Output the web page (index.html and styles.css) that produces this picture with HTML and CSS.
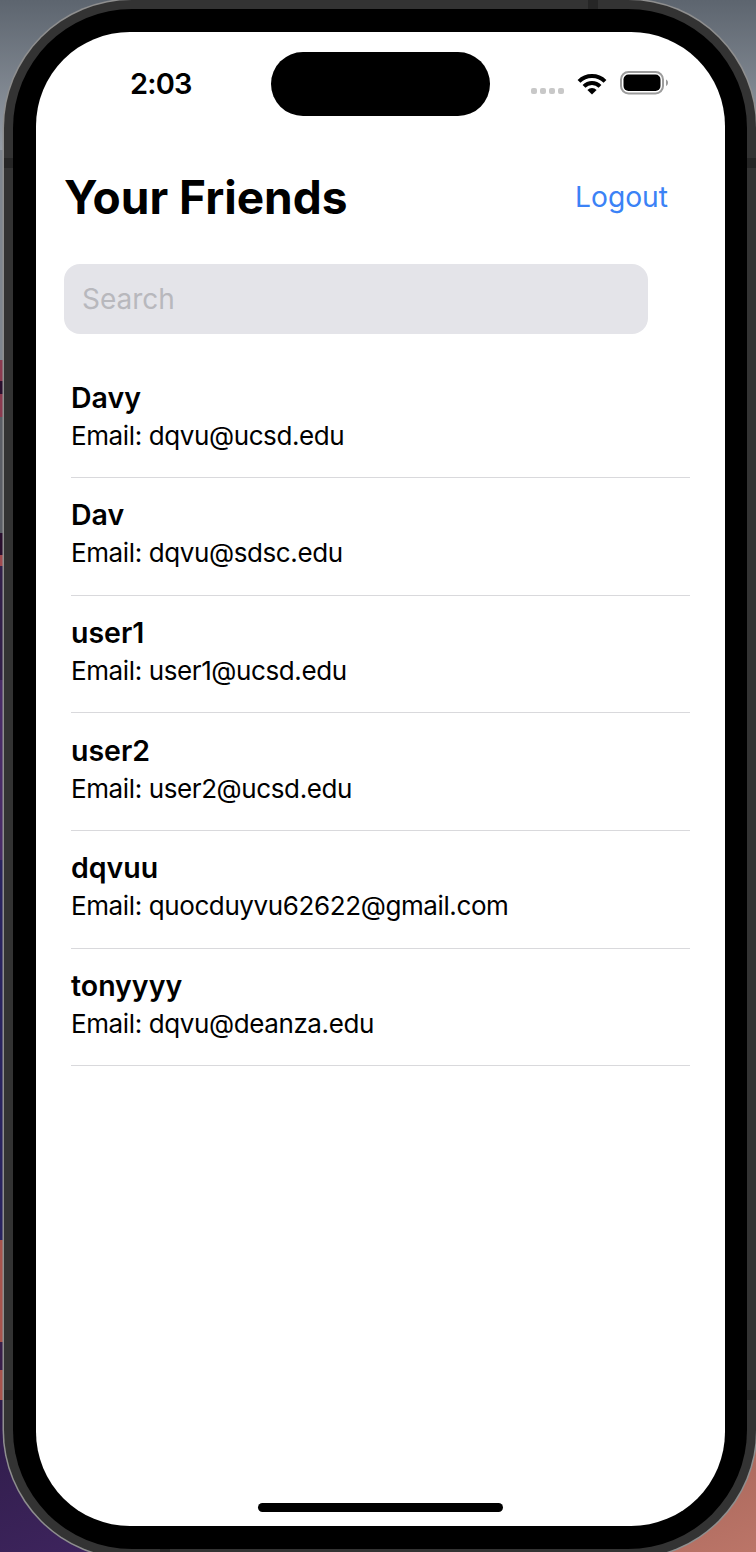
FILE: index.html
```html
<!DOCTYPE html>
<html lang="en">
<head>
  <meta charset="UTF-8">
  <title>Your Friends</title>
  <link rel="stylesheet" href="styles.css">
</head>
<body>
  <div class="device">
    <span class="band band-top"></span>
    <span class="band band-bottom"></span>
    <span class="band band-left-1"></span>
    <span class="band band-left-2"></span>
    <span class="band band-right-1"></span>
    <span class="band band-right-2"></span>
    <div class="bezel">
      <div class="screen">

        <!-- Status bar -->
        <div class="status">
          <div class="time">2:03</div>
          <div class="island"></div>
          <div class="icons">
            <div class="dots"><i></i><i></i><i></i><i></i></div>
            <svg class="wifi" width="30" height="23" viewBox="0 0 30 23">
              <path d="M2 9.4a18.4 18.4 0 0 1 26 0" fill="none" stroke="#000" stroke-width="4"/>
              <path d="M7 14.4a11.3 11.3 0 0 1 16 0" fill="none" stroke="#000" stroke-width="4"/>
              <path d="M15 22.6 10.4 18a6.5 6.5 0 0 1 9.2 0z" fill="#000"/>
            </svg>
            <svg class="battery" width="48" height="24" viewBox="0 0 48 24">
              <rect x="1" y="1" width="42" height="21.5" rx="7.5" fill="#fff" stroke="#9c9c9c" stroke-width="2"/>
              <rect x="3.5" y="3.5" width="37" height="16.5" rx="5" fill="#000"/>
              <path d="M46 8.5c1.2.4 2 1.700 2 3.200s-.8 2.800-2 3.200z" fill="#9c9c9c"/>
            </svg>
          </div>
        </div>

        <!-- Header -->
        <div class="header">
          <h1>Your Friends</h1>
          <a class="logout">Logout</a>
        </div>

        <div class="search">Search</div>

        <!-- Friends list -->
        <div class="list">
          <div class="row">
            <div class="name">Davy</div>
            <div class="email">Email: dqvu@ucsd.edu</div>
          </div>
          <div class="row">
            <div class="name">Dav</div>
            <div class="email">Email: dqvu@sdsc.edu</div>
          </div>
          <div class="row">
            <div class="name">user1</div>
            <div class="email">Email: user1@ucsd.edu</div>
          </div>
          <div class="row">
            <div class="name">user2</div>
            <div class="email">Email: user2@ucsd.edu</div>
          </div>
          <div class="row">
            <div class="name">dqvuu</div>
            <div class="email">Email: quocduyvu62622@gmail.com</div>
          </div>
          <div class="row">
            <div class="name">tonyyyy</div>
            <div class="email">Email: dqvu@deanza.edu</div>
          </div>
        </div>

        <div class="home-bar"></div>
      </div>
    </div>
  </div>
</body>
</html>
```

FILE: styles.css
```css
html {
  overflow: hidden;
}

body {
  margin: 0;
  height: 1552px;
  overflow: hidden;
  font-family: Inter, "Noto Sans", sans-serif;
  color: #000;
  background:
    linear-gradient(to bottom,
      transparent 0, transparent 150px,
      #7f868f 150px, #7f868f 360px,
      #8b3a50 360px, #8b3a50 381px,
      #2a0f2e 381px, #2a0f2e 394px,
      #8b3a50 394px, #8b3a50 417px,
      #5b5e66 417px, #5b5e66 533px,
      #2a0f2e 533px, #2a0f2e 555px,
      #a04a50 555px, #a04a50 566px,
      #33204a 566px, #33204a 680px,
      #4a2c68 680px, #4a2c68 860px,
      #2a2460 860px, #2a2460 1240px,
      #a8544e 1240px, #a8544e 1342px,
      #3a1f4a 1342px, #3a1f4a 1370px,
      #a8544e 1370px, #a8544e 1400px,
      transparent 1400px) left top / 10px 100% no-repeat,
    linear-gradient(to bottom right, #2e1c48, #47296a) left bottom / 378px 160px no-repeat,
    linear-gradient(to bottom right, #8f5248, #bb7568) right bottom / 378px 160px no-repeat,
    linear-gradient(to bottom, #5d656f, #969da6) left top / 100% 150px no-repeat,
    #333;
}

.device {
  position: relative;
  box-sizing: border-box;
  width: 752px;
  height: 1558px;
  margin-left: 4px;
  padding: 9px;
  background: #333;
  border-radius: 128px;
  box-shadow: 0 0 0 1.500px #8f8f8f;
}

/* antenna bands on the frame */
.band {
  position: absolute;
  background: #262626;
}

.band-top {
  top: 0;
  left: 584px;
  width: 10px;
  height: 9px;
}

.band-bottom {
  bottom: 6px;
  left: 156px;
  width: 10px;
  height: 3px;
}

.band-left-1,
.band-left-2 {
  left: 0;
  width: 9px;
  height: 10px;
}

.band-right-1,
.band-right-2 {
  right: 0;
  width: 9px;
  height: 10px;
}

.band-left-1,
.band-right-1 {
  top: 158px;
}

.band-left-2,
.band-right-2 {
  top: 1390px;
}

.bezel {
  position: relative;
  box-sizing: border-box;
  height: 1540px;
  padding: 23px 22px 23px 23px;
  background: #000;
  border-radius: 119px;
}

.screen {
  display: flex;
  flex-direction: column;
  height: 1494px;
  overflow: hidden;
  background: #fff;
  border-radius: 94px;
}

.status {
  display: grid;
  grid-template-columns: 235px 219px 1fr;
  height: 64px;
  padding-top: 20px;
  flex-shrink: 0;
}

.time {
  padding: 13px 0 0 94px;
  font-size: 29px;
  line-height: 38px;
  font-weight: 600;
  letter-spacing: -0.8px;
}

.island {
  background: #000;
  border-radius: 32px;
}

.icons {
  display: flex;
  align-items: flex-end;
  height: 43px;
  padding-left: 41px;
}

.dots {
  display: flex;
  gap: 3px;
  margin-bottom: 1px;
}

.dots i {
  width: 6px;
  height: 6px;
  background: #c8c8c8;
  border-radius: 2px;
}

.wifi {
  margin-left: 13px;
}

.battery {
  margin-left: 13px;
}

.header {
  display: flex;
  justify-content: space-between;
  align-items: center;
  margin-top: 54px;
  padding: 0 57px 0 28px;
}

h1 {
  margin: 0;
  font-size: 46px;
  line-height: 54px;
  font-weight: 700;
}

.logout {
  font-size: 28.2px;
  color: #3b82f6;
}

.search {
  box-sizing: border-box;
  width: 584px;
  height: 70px;
  margin: 40px 0 0 28px;
  padding-left: 18px;
  font-size: 28px;
  line-height: 70px;
  color: #b8b8bd;
  background: #e4e4e9;
  border-radius: 16px;
}

.list {
  width: 619px;
  margin: 26.4px 0 0 35px;
}

.row {
  box-sizing: border-box;
  height: 117.67px;
  padding: 19.4px 0 0;
  border-bottom: 1px solid #d9d9dc;
}

.name {
  font-size: 28.5px;
  line-height: 35px;
  font-weight: 600;
}

.email {
  font-size: 26px;
  line-height: 41px;
  letter-spacing: -0.39px;
}

.home-bar {
  width: 245px;
  height: 9px;
  margin: auto 0 14px 222px;
  background: #000;
  border-radius: 5px;
}
```
